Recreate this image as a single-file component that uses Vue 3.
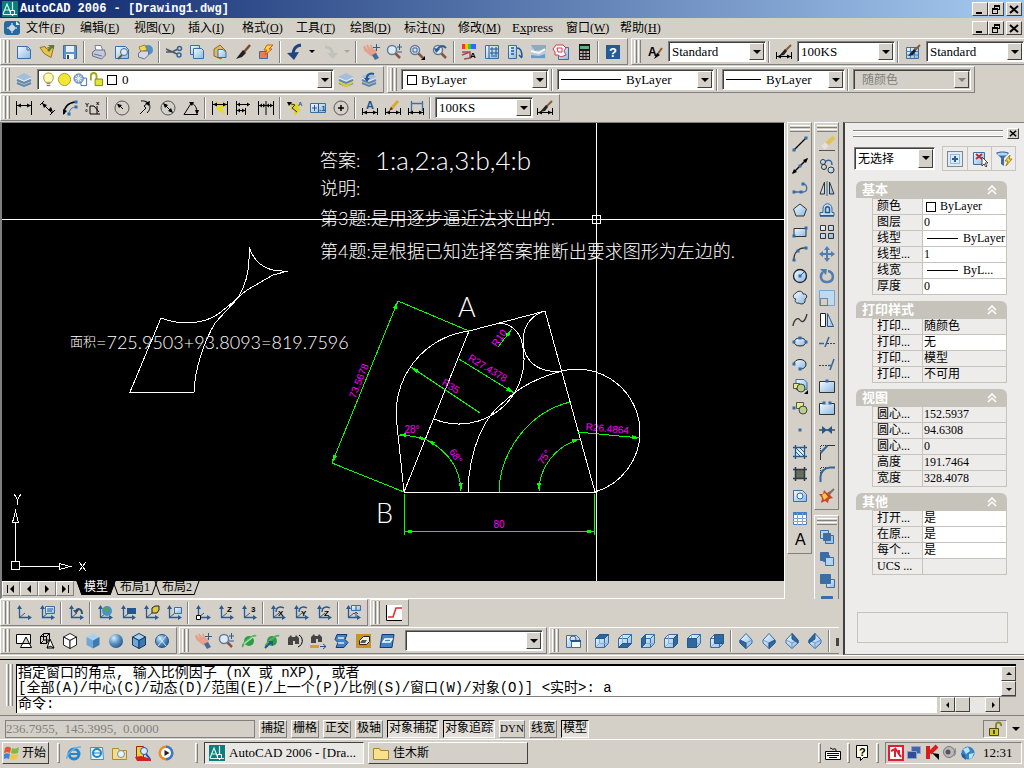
<template>
  <div class="app">
    <svg class="defs" aria-hidden="true">
      <defs>
        <linearGradient id="sky" x1="0" y1="0" x2="1" y2="1">
          <stop offset="0" stop-color="#f4faff" />
          <stop offset="1" stop-color="#8ab8e4" />
        </linearGradient>
        <radialGradient id="ball" cx="0.35" cy="0.3" r="0.8">
          <stop offset="0" stop-color="#d4ecff" />
          <stop offset="0.5" stop-color="#5b92c4" />
          <stop offset="1" stop-color="#1c4c80" />
        </radialGradient>
      </defs>
    </svg>

    <header class="titlebar">
      <svg class="icon" viewBox="0 0 16 16" v-html="icons.acad"></svg>
      <h1>AutoCAD 2006 - [Drawing1.dwg]</h1>
      <div class="window-buttons">
        <button v-for="b in windowButtons" :key="b" :class="b" :aria-label="b">
          <svg viewBox="0 0 10 9" v-html="glyphs[b]"></svg>
        </button>
      </div>
    </header>

    <nav class="menubar">
      <svg class="icon" viewBox="0 0 16 16" v-html="icons.dwg"></svg>
      <button v-for="m in menus" :key="m.name" class="menu" :class="{ latin: m.name === 'Express' }">
        <template v-if="m.key">{{ m.name }}(<u>{{ m.key }}</u>)</template>
        <template v-else>E<u>x</u>press</template>
      </button>
      <div class="window-buttons">
        <button v-for="b in windowButtons" :key="b" :class="b" :aria-label="'document ' + b">
          <svg viewBox="0 0 10 9" v-html="glyphs[b]"></svg>
        </button>
      </div>
    </nav>

    <div v-for="(row, r) in topRows" :key="r" class="toolbar-row">
      <div v-for="(bar, n) in row" :key="n" class="toolbar">
        <span class="grip"></span>
        <template v-for="(item, i) in bar" :key="i">
          <span v-if="item === '|'" class="sep"></span>
          <span v-else-if="item === 'v' || item === 'x'" class="drop" :class="{ off: item === 'x' }"></span>
          <button v-else-if="typeof item === 'string'" class="tool" :aria-label="item">
            <svg class="icon" viewBox="0 0 16 16" v-html="icons[item]"></svg>
          </button>
          <span v-else class="combo" :class="[item.size, { disabled: item.disabled }]">
            <svg v-for="g in item.icons || []" :key="g" class="icon small" viewBox="0 0 16 16" v-html="icons[g]"></svg>
            <i v-if="item.swatch" class="swatch"></i>
            <i v-if="item.line" class="line" :class="item.line"></i>
            <select :aria-label="item.label" :disabled="item.disabled"><option>{{ item.text }}</option></select>
            <i class="arrow"></i>
          </span>
        </template>
      </div>
    </div>

    <div class="workspace">
      <div class="left">
        <div class="drawing-row">
          <section class="drawing">
            <svg class="canvas" role="img" aria-label="Drawing1.dwg">
              <defs>
                <marker id="tip" viewBox="0 0 8 4" refX="8" refY="2" markerWidth="8" markerHeight="4" orient="auto-start-reverse">
                  <path d="M0 0L8 2L0 4Z" fill="#0f0" />
                </marker>
              </defs>
              <g transform="translate(-2 -123)">
                <g class="white">
                  <path d="M404 492H595L545 311L469 331L404 492L397 425" />
                  <path d="M469 331A83 83 0 0 0 397 425" />
                  <path d="M434 419A65 65 0 0 0 522 343A24 24 0 0 0 499 323" />
                  <path d="M545 311C532 315 523 325 523 341C523 360 538 374 562 371" />
                  <path d="M468 492C469 448 485 415 505 401C520 386 540 377 562 371A63 63 0 0 1 640 432A63 63 0 0 1 595 492" />
                  <path d="M161 318C178 325 200 324 213 317C222 313 232 302 247 290L273 275L288 271C270 272 256 267 249 247C250 262 248 282 238 298L215 323C204 342 195 368 194 392H130Z" />
                  <path d="M11.500 561.500h8v8h-8zM15.500 561V522M20 566.500H59M15.500 511L12.500 522.500H18.500ZM70 566.500L59.500 563.500V569.500Z" />
                  <path d="M14 494L17.500 499.500L21 494M17.500 499.500V505M79 562L86 571M86 562L79 571" />
                </g>
                <g class="green">
                  <path d="M404.500 494V535M594.500 494V535M398 301L469 331M332 463L404 492" />
                  <path class="both" d="M404 531.500H595" />
                  <path class="both" d="M398 301L332 463" />
                  <path class="end" d="M498 347L512 329" />
                  <path class="end" d="M459 359L514 393" />
                  <path class="end" d="M480 413L411 367" />
                  <path class="end" d="M578 432L640 438" />
                  <path class="both" d="M398 435Q412 435 427 440" />
                  <path class="both" d="M427 440Q460 458 461 491" />
                  <path d="M570 402C530 412 500 450 499 492" />
                  <path class="both" d="M580 439C555 446 539 468 539 491" />
                </g>
                <g class="dims">
                  <text v-for="d in dims" :key="d.text" :transform="`translate(${d.x} ${d.y}) rotate(${d.angle})`">{{ d.text }}</text>
                </g>
                <g class="notes">
                  <text class="big" x="458" y="317">A</text>
                  <text class="big" x="376" y="523">B</text>
                  <text class="hanzi" x="320" y="167">答案:</text>
                  <text class="answers" x="375" y="170">1:a,2:a,3:b,4:b</text>
                  <text class="hanzi" x="320" y="195">说明:</text>
                  <text class="hanzi" x="320" y="225">第3题:是用逐步逼近法求出的.</text>
                  <text class="hanzi" x="320" y="258">第4题:是根据已知选择答案推断出要求图形为左边的.</text>
                  <text class="area" x="70" y="346">面积</text>
                  <text class="sum" x="96" y="349">=725.9503+93.8093=819.7596</text>
                </g>
                <path class="cross" d="M2 219.500H4000M596.500 123V4000M592.500 215.500h8v8h-8z" />
              </g>
            </svg>
            <div class="tabs">
              <button v-for="b in ['first', 'prev', 'next', 'last']" :key="b" class="nav" :aria-label="b">
                <svg viewBox="0 0 10 10" v-html="glyphs[b]"></svg>
              </button>
              <button v-for="(t, i) in ['模型', '布局1', '布局2']" :key="t" class="tab" :class="{ active: i === 0 }">{{ t }}</button>
            </div>
          </section>
          <aside v-for="(column, c) in sideColumns" :key="c" class="side">
            <div v-for="(bar, n) in column" :key="n" class="toolbar vertical">
              <span class="grip"></span>
              <button v-for="item in bar" :key="item" class="tool" :aria-label="item">
                <svg class="icon" viewBox="0 0 16 16" v-html="icons[item]"></svg>
              </button>
            </div>
          </aside>
        </div>
        <div v-for="(row, r) in bottomRows" :key="r" class="toolbar-row">
          <div v-for="(bar, n) in row" :key="n" class="toolbar">
            <span class="grip"></span>
            <template v-for="(item, i) in bar" :key="i">
              <span v-if="item === '|'" class="sep"></span>
              <button v-else-if="typeof item === 'string'" class="tool" :aria-label="item">
                <svg class="icon" viewBox="0 0 16 16" v-html="icons[item]"></svg>
              </button>
              <span v-else class="combo" :class="item.size">
                <select :aria-label="item.label"><option>{{ item.text }}</option></select>
                <i class="arrow"></i>
              </span>
            </template>
          </div>
        </div>
      </div>

      <aside class="properties">
        <div class="palette-head">
          <span class="palette-grip"></span>
          <button class="palette-close" aria-label="close palette">
            <svg viewBox="0 0 10 9" v-html="glyphs.close"></svg>
          </button>
        </div>
        <div class="palette-pick">
          <span class="combo selection">
            <select aria-label="选择"><option>无选择</option></select>
            <i class="arrow"></i>
          </span>
          <div class="pick-buttons">
            <button v-for="b in ['pickadd', 'pickobj', 'quick']" :key="b" :aria-label="b">
              <svg class="icon" viewBox="0 0 16 16" v-html="icons[b]"></svg>
            </button>
          </div>
        </div>
        <section v-for="s in sections" :key="s.title" class="group">
          <h2>
            {{ s.title }}
            <svg viewBox="0 0 10 10"><path d="M1 5L5 1L9 5M1 9L5 5L9 9" fill="none" stroke="#fff" stroke-width="1.5" /></svg>
          </h2>
          <table>
            <tbody>
              <tr v-for="(p, i) in s.rows" :key="i">
                <th scope="row">{{ p[0] }}</th>
                <td :class="{ locked: p[2] === 'locked' }">
                  <span class="cell">
                    <i v-if="p[2] === 'swatch'" class="swatch"></i>
                    <i v-if="p[2] === 'line'" class="line thin"></i>{{ p[1] }}
                  </span>
                </td>
              </tr>
            </tbody>
          </table>
        </section>
        <div class="hint"></div>
      </aside>
    </div>

    <section class="command">
      <span class="command-grip"></span>
      <div class="console">
        <div class="history">
          <p>指定窗口的角点, 输入比例因子 (nX 或 nXP), 或者<br />[全部(A)/中心(C)/动态(D)/范围(E)/上一个(P)/比例(S)/窗口(W)/对象(O)] &lt;实时&gt;: a</p>
          <div class="vscroll">
            <button aria-label="scroll up"><svg viewBox="0 0 10 10" v-html="glyphs.up"></svg></button>
            <button aria-label="scroll down"><svg viewBox="0 0 10 10" v-html="glyphs.down"></svg></button>
          </div>
        </div>
        <div class="prompt">
          <label for="cmd">命令:</label>
          <input id="cmd" type="text" />
          <div class="hscroll">
            <button aria-label="scroll left"><svg viewBox="0 0 10 10" v-html="glyphs.left"></svg></button>
            <button class="thumb" aria-label="scroll thumb"></button>
            <i></i>
            <button aria-label="scroll right"><svg viewBox="0 0 10 10" v-html="glyphs.right"></svg></button>
          </div>
        </div>
      </div>
    </section>

    <div class="statusbar">
      <output class="coords">236.7955, &nbsp;145.3995, &nbsp;0.0000</output>
      <button v-for="m in modes" :key="m.text" class="mode" :class="{ on: m.on, latin: m.text === 'DYN' }">{{ m.text }}</button>
      <button class="lock" aria-label="lock toolbars">
        <svg class="icon" viewBox="0 0 16 16" v-html="icons.padlock"></svg>
      </button>
      <i class="drop wide"></i>
    </div>

    <footer class="taskbar">
      <button class="start">
        <svg class="icon" viewBox="0 0 16 16" v-html="icons.flag"></svg>开始
      </button>
      <span class="divider"></span>
      <div class="quick">
        <button v-for="q in ['ie', 'outlook', 'explorer', 'viewer', 'player']" :key="q" :aria-label="q">
          <svg class="icon" viewBox="0 0 16 16" v-html="icons[q]"></svg>
        </button>
      </div>
      <span class="divider"></span>
      <button class="task current">
        <svg class="icon" viewBox="0 0 16 16" v-html="icons.acad"></svg>AutoCAD 2006 - [Dra...
      </button>
      <button class="task">
        <svg class="icon" viewBox="0 0 16 16" v-html="icons.folder"></svg>佳木斯
      </button>
      <div class="tray-tools">
        <span class="divider"></span>
        <svg class="icon" viewBox="0 0 16 16" v-html="icons.keyboard"></svg>
        <span class="divider"></span>
        <svg class="icon" viewBox="0 0 16 16" v-html="icons.ask"></svg>
        <span class="divider"></span>
      </div>
      <div class="tray">
        <svg v-for="t in ['redapp', 'network', 'kav', 'volume', 'globe']" :key="t" class="icon" viewBox="0 0 16 16" v-html="icons[t]"></svg>
        <time>12:31</time>
      </div>
    </footer>
  </div>
</template>

<script setup>
const windowButtons = ['minimize', 'restore', 'close']

const glyphs = {
  minimize: '<path d="M1 7h6v2H1z"/>',
  restore: '<path d="M3 0h6v5H7v4H1V3h2zM4 2v1h3v1h1V2zM2 5v3h4V5z" fill-rule="evenodd"/>',
  close: '<path d="M1 1L9 8M9 1L1 8" stroke="#000" stroke-width="2"/>',
  first: '<path d="M1 1h1v8H1zM8 1v8L4 5z"/>',
  prev: '<path d="M7 1v8L3 5z"/>',
  next: '<path d="M3 1v8l4-4z"/>',
  last: '<path d="M8 1h1v8H8zM2 1v8l4-4z"/>',
  up: '<path d="M2 6h6L5 3z"/>',
  down: '<path d="M2 4h6L5 7z"/>',
  left: '<path d="M6 2v6L3 5z"/>',
  right: '<path d="M4 2v6l3-3z"/>',
}

const menus = [
  { name: '文件', key: 'F' },
  { name: '编辑', key: 'E' },
  { name: '视图', key: 'V' },
  { name: '插入', key: 'I' },
  { name: '格式', key: 'O' },
  { name: '工具', key: 'T' },
  { name: '绘图', key: 'D' },
  { name: '标注', key: 'N' },
  { name: '修改', key: 'M' },
  { name: 'Express' },
  { name: '窗口', key: 'W' },
  { name: '帮助', key: 'H' },
]

const topRows = [
  [
    ['new', 'open', 'save', '|', 'print', 'preview', 'publish', '|', 'cut', 'copy', 'paste', 'match', 'block', '|', 'undo', 'v', 'redo', 'x', '|', 'pan', 'zoom', 'zoomwin', 'zoomprev', '|', 'props', 'center', 'palettes', 'sheets', 'markup', 'calc', '|', 'help'],
    ['textstyle', { text: 'Standard', label: '文字样式', size: 'w98' }, '|', 'dimstyle', { text: '100KS', label: '标注样式', size: 'w98' }, '|', 'tablestyle', { text: 'Standard', label: '表格样式', size: 'w98' }],
  ],
  [
    ['layers', { text: '0', label: '图层', size: 'w298', icons: ['bulb', 'sun', 'freeze', 'unlock'], swatch: true }, 'layermake', 'layerprev'],
    [
      { text: 'ByLayer', label: '颜色', size: 'w148', swatch: true }, '|',
      { text: 'ByLayer', label: '线型', size: 'w158', line: 'long' }, '|',
      { text: 'ByLayer', label: '线宽', size: 'w123', line: 'mid' }, '|',
      { text: '随颜色', label: '打印样式', size: 'w120', disabled: true },
    ],
  ],
  [
    ['dlinear', 'daligned', 'darc', 'dordinate', '|', 'dradius', 'djogged', 'ddiameter', 'dangular', '|', 'dquick', 'dbaseline', 'dcontinue', '|', 'dleader', 'dtolerance', 'dcenter', '|', 'dedit', 'dtedit', 'dupdate', '|', { text: '100KS', label: '标注样式', size: 'w98' }, 'dimstyle'],
  ],
]

const sideColumns = [
  [['line', 'xline', 'pline', 'polygon', 'rect', 'arc', 'circle', 'cloud', 'spline', 'ellipse', 'ellarc', 'insert', 'mkblock', 'point', 'hatch', 'gradient', 'region', 'table', 'mtext']],
  [
    ['erase', 'copyobj', 'mirror', 'offset', 'array', 'move', 'rotate', 'scale', 'stretch', 'trim', 'extend', 'breakpt', 'break', 'join', 'chamfer', 'fillet', 'explode'],
    ['front', 'back', 'above', 'under'],
  ],
]

const bottomRows = [
  [
    ['ucs', 'ucsnamed', '|', 'ucsprev', '|', 'ucsworld', 'ucsobj', 'ucsface', 'ucsview', '|', 'ucsorigin', 'ucsz', 'ucs3', '|', 'rotx', 'roty', 'rotz', '|', 'ucsapply'],
    ['graph'],
  ],
  [
    ['wire2d', 'wire3d', 'hidden', 'flat', 'gouraud', 'flatedge', 'gouraudedge'],
    ['pan', 'zoom', 'orbit', 'corbit', 'swivel', 'distance', 'clip', 'clipfront', 'clipback', { text: '', label: '视图', size: 'w138' }],
    ['views', '|', 'vtop', 'vbottom', 'vleft', 'vright', 'vfront', 'vback', '|', 'sw', 'se', 'ne', 'nw', '|', 'camera'],
  ],
]

const sections = [
  {
    title: '基本',
    rows: [
      ['颜色', 'ByLayer', 'swatch'],
      ['图层', '0'],
      ['线型', 'ByLayer', 'line'],
      ['线型...', '1'],
      ['线宽', 'ByL...', 'line'],
      ['厚度', '0'],
    ],
  },
  {
    title: '打印样式',
    rows: [
      ['打印...', '随颜色', 'locked'],
      ['打印...', '无'],
      ['打印...', '模型', 'locked'],
      ['打印...', '不可用', 'locked'],
    ],
  },
  {
    title: '视图',
    rows: [
      ['圆心...', '152.5937', 'locked'],
      ['圆心...', '94.6308', 'locked'],
      ['圆心...', '0', 'locked'],
      ['高度', '191.7464', 'locked'],
      ['宽度', '328.4078', 'locked'],
    ],
  },
  {
    title: '其他',
    rows: [
      ['打开...', '是'],
      ['在原...', '是'],
      ['每个...', '是'],
      ['UCS ...', '', 'locked'],
    ],
  },
]

const modes = [
  { text: '捕捉' },
  { text: '栅格' },
  { text: '正交' },
  { text: '极轴' },
  { text: '对象捕捉', on: true },
  { text: '对象追踪', on: true },
  { text: 'DYN' },
  { text: '线宽' },
  { text: '模型', on: true },
]

const dims = [
  { text: '73.5678', x: 362, y: 382, angle: -68 },
  { text: 'R10', x: 502, y: 340, angle: -54 },
  { text: 'R27.4378', x: 486, y: 371, angle: 31 },
  { text: 'R35', x: 449, y: 389, angle: 33 },
  { text: '28°', x: 412, y: 433, angle: 0 },
  { text: '68°', x: 453, y: 458, angle: 55 },
  { text: '75°', x: 547, y: 459, angle: -55 },
  { text: 'R26.4864', x: 607, y: 432, angle: 5 },
  { text: '80', x: 499, y: 528, angle: 0 },
]

// small builders shared by the icon set
const stroke = (d, color = '#000', width = 1) => `<path d="${d}" fill="none" stroke="${color}" stroke-width="${width}"/>`
const fill = (d, color = '#000') => `<path d="${d}" fill="${color}"/>`
const shape = (d, color = 'url(#sky)', edge = '#3a6ea5') => `<path d="${d}" fill="${color}" stroke="${edge}"/>`
const dots = (...pts) => pts.map(([x, y]) => `<rect x="${x - 1.5}" y="${y - 1.5}" width="3" height="3" fill="#2f6dad"/>`).join('')
const letter = (t, x, y, size = 9, color = '#000') => `<text x="${x}" y="${y}" font-size="${size}" font-weight="700" font-family="Liberation Sans, sans-serif" fill="${color}">${t}</text>`

const page = shape('M1.500 2.500h10l3 3v9h-13z')
const span = stroke('M.5 8v7M15.500 8v7M1 12.500h14') + fill('M1 12.500l4-2v4zM15 12.500l-4-2v4z')
const brush = stroke('M15 1L9 7', '#8a5a34', 2) + fill('M9 5l2 2-3 4-5 1z', '#222')
const axes = stroke('M3.500 3v9.500H14', '#2c5a92', 1.3) + stroke('M3.500 12.500L9 8', '#2c5a92') + fill('M3.500 0L1 4h5zM16 12.500l-4-2.500v5z', '#2c5a92')
const lens = '<circle cx="6" cy="6" r="4.500" fill="#dcebf8" stroke="#667b92" stroke-width="1.500"/>' + stroke('M9.500 9.500L14 14', '#8a5540', 2.5)
const hand = fill('M0 3l1.500-1.500L5 6 3 1l1.500-.5L8 5 7 1l1.500-.5L11 6l1-1 1.500 1v5l-1 2-5-1-6-5z', '#e5a08e') + fill('M9 11l4-2 3 5-4 2z', '#446b9c')
const cubeEdges = 'M1.500 5.500h9v9h-9zM1.500 5.500l4-4h9v9l-4 4M10.500 5.500l4-4'
const cube = (face) => shape(cubeEdges) + stroke('M5.500 1.500v9h9M1.500 14.500l4-4', '#8aaed2') + shape(face, '#2f689e', '#24578c')
const box = (top, left, right, edge) =>
  shape('M8 .5L14.500 4 8 7.500 1.500 4z', top, edge) + shape('M1.500 4L8 7.500v8L1.500 12z', left, edge) + shape('M14.500 4L8 7.500v8l6.500-3.500z', right, edge)
const diamond = (face) => shape('M8 .5L14 7v3l-6 5.500L2 10V7z') + stroke('M2 7l6 3 6-3M8 10v5', '#6d9acb') + shape(face, '#2f689e', '#24578c')
const stack = fill('M8 1l8 4-8 4-8-4z', '#a5bfda') + stroke('M1 8l7 3 7-3M1 11l7 3 7-3', '#6186ae', 2) + stroke('M1 6l7 3 7-3', '#dcebf8')
const order = (a, b) => shape('M1.500 1.500h8v8h-8z', a) + shape('M6.500 6.500h8v8h-8z', b)
const saturn = '<circle cx="8" cy="8" r="5" fill="#2d9b48"/>' + stroke('M2 14C0 11 13 1 15 3', '#50b060', 2)

const icons = {
  acad: fill('M0 0h16v16H0z', '#0b7f7a') + stroke('M1 13L5 3l4 10M3 9h5M10.500 1v14M1 13.500h14', '#d8f2ef', 1.2) + shape('M8.500 9.500h4v4h-4z', '#0b7f7a', '#fff'),
  dwg: '<rect y="1" width="16" height="14" rx="3" fill="#27699d"/>' + fill('M12 1l4 4h-4z', '#d8ecfa') + stroke('M8 3v10M3 8h10M6 6h4v4H6z', '#fff'),
  new: page + stroke('M11 3v3h3', '#3a6ea5'),
  open: shape('M1 3.500l5-1 1 2 8-3-3 12-7-4z', '#e8c34d', '#9a7424') + fill('M9 1h6v4l-2-1-3 4-2-2 3-3z', '#5b7a3c'),
  save: shape('M1.500 1.500h13v13h-13z', '#5c93ca') + fill('M4 2h8v6H4z', '#e4f1fc') + fill('M4 10h8v5H4z', '#f5f5f5') + fill('M5 11h2v4H5z', '#345'),
  print: shape('M4 1.500h6l2 6H5z', '#fff', '#77809a') + shape('M1.500 8l3-2h9l1 5-4 4-9-3z', '#c5c9dc', '#666e8c') + stroke('M3 10l8 2', '#69718e'),
  preview: page + '<circle cx="10" cy="8" r="3.500" fill="#d8ecfb" stroke="#4b6a8a"/>' + stroke('M8 11l-4 4', '#7a5230', 2),
  publish: '<circle cx="11" cy="6" r="5" fill="#4d92cb"/>' + shape('M2 3l6-2 2 5-6 2z', '#f5d94b', '#a5841e') + shape('M1.500 9l3-2h7v4l-4 4-6-2z', '#d7d9e4', '#6d7392'),
  cut: stroke('M0 5l11 5M0 8h6l6-3', '#4a5666', 1.5) + '<circle cx="13.500" cy="4.500" r="2" fill="none" stroke="#35659b" stroke-width="1.500"/><circle cx="13" cy="11" r="2" fill="none" stroke="#35659b" stroke-width="1.500"/>',
  copy: shape('M1.500 1.500h9v9h-9z') + shape('M4.500 4.500h8l2 2v8h-10z'),
  paste: shape('M2 5l6-4 6 6-5 8-7-3z', '#d9b96a', '#8d6b2a') + shape('M6 5.500h5l3 3v5H6z'),
  match: stroke('M15 1L9 8', '#7a4a2a', 2.5) + fill('M8 6l3 3-4 4-6 2 3-4z', '#222'),
  block: shape('M1.500 7.500h8v7h-8z', '#f07a50', '#3a6ea5') + shape('M9 1h6l-4 4h3l-7 6 2-5H6z', '#ffd84a', '#d05a1c'),
  undo: stroke('M14 1C8 2 5 6 7 13', '#1f4480', 3) + fill('M0 9l12-1-5 8z', '#1f4480'),
  redo: stroke('M3 3c6 0 8 4 7 8', '#c2c2bc', 3) + fill('M16 9H5l6 6z', '#c2c2bc'),
  pan: hand + stroke('M13.500 0v7M10 3.500h7', '#2f5c90'),
  zoom: lens + stroke('M13.500 0v6M11 3h5M11 8h5', '#2f5c90'),
  zoomwin: lens + stroke('M4 4h4v4H4z', '#2f5c90') + fill('M12 16h4v-4z'),
  zoomprev: lens + stroke('M14 4C10 0 6 3 5 7', '#2f5c90', 2) + fill('M2 4l6 1-4 4z', '#2f5c90'),
  props: '<path d="M1 0h4v5H1z" fill="#f33"/><path d="M4 0h3v5H4z" fill="#fc0"/><path d="M7 0h3v5H7z" fill="#3c3"/><path d="M10 0h5v5h-5z" fill="#36f"/>' + stroke('M1 8h8M1 11l8-3v6l-6 1', '#a34e5c', 1.5) + letter('A', 9, 14, 8),
  center: shape('M1.500 1.500h13v13h-13z') + stroke('M5 2v12M7 4h2v2H7zM11 4h2v2h-2zM7 8h2v2H7zM11 8h2v2h-2zM7 12h6', '#24578c'),
  palettes: shape('M1.500 1.500h8v13h-8z') + stroke('M4 4h3M4 7h3M4 10h3M10 4c4 0 5 3 5 9M12 11l3 3', '#24578c', 1.5),
  sheets: fill('M1 1h15v14H1z', '#b9cbd8') + fill('M1 1h15v4L5 7z', '#8fa9bd') + stroke('M1 7l8 2 6-4', '#f4f8fa', 2) + fill('M1 11l8 1 6-2v4H1z', '#6c9bc4'),
  markup: shape('M5.500 3.500h10v12h-10z') + shape('M3 1h7l3 3-2 3 2 4-5 2-3-2-3 0V8L0 5z', '#fff', '#dc3549') + stroke('M4 4h5v4H5z', '#dc3549'),
  calc: fill('M3 0h11v16H3z', '#201818') + fill('M4 2h9v3H4z', '#58b084') + stroke('M4 8h9M4 11h9M4 14h9', '#e9dede', 1.5) + stroke('M7 6v9M10 6v9', '#201818'),
  help: fill('M1 1h14v14H1z', '#235b96') + letter('?', 4, 13, 13, '#fff'),
  textstyle: letter('A', 1, 12, 12) + stroke('M15 4l-5 7', '#8a5a34', 2) + fill('M10 9l3 2-6 4z'),
  dimstyle: span + brush,
  tablestyle: shape('M1.500 3.500h12v11h-12z') + stroke('M1 7.500h12M1 11h12M5.500 4v10M9.500 4v10', '#4383c5') + brush,
  layers: stack,
  layermake: stack + stroke('M1 10l7 4 7-4', '#e4cf20', 2),
  layerprev: stack + stroke('M13 2C8 0 5 4 6 8', '#28568c', 2) + fill('M3 6l6 0-3 4z', '#28568c'),
  bulb: '<path d="M5 11C1 6 3 1 8 1s7 5 3 10z" fill="#fffab4" stroke="#a99232"/>' + stroke('M6 12.500h4M6 14.500h4', '#667'),
  sun: '<circle cx="8" cy="8" r="6.500" fill="#f3e632" stroke="#9aa123"/>',
  freeze: shape('M8.500 6.500h6v8h-6z', '#fff') + '<circle cx="6" cy="7" r="5" fill="#91afcd" stroke="#567ba3"/>' + stroke('M2 7h8M6 3v8M3 4l6 6M9 4l-6 6', '#e4eff8'),
  unlock: stroke('M2 9V4c0-4 6-4 6 0v4', '#a4a51b', 2) + shape('M6.500 7.500h8v7h-8z', '#dfe53b', '#7e831c'),
  dlinear: stroke('M.5 1v14M15.500 1v14M1 5.500h14') + fill('M1 5.500l4-2v4zM15 5.500l-4-2v4z'),
  daligned: stroke('M1 5l4-4M11 15l5-5M3 3l10 10') + fill('M3 3l5 2-3 3zM14 12l-5-2 3-3z'),
  darc: stroke('M2 14C2 7 6 3 13 2', '#000', 1.3) + stroke('M7 14c0-4 3-7 7-7', '#4378b4') + dots([14, 2], [14, 7], [7, 14]) + fill('M1 15V9l4 2z'),
  dordinate: stroke('M5 6v8h10M5 6h4l5 6M12 6v8') + letter('x', 11, 5, 6) + letter('Y', 0, 7, 6) + letter('°', 0, 15, 7),
  dradius: '<circle cx="8" cy="8" r="7" fill="none" stroke="#555"/>' + stroke('M9 9L4 4') + fill('M3 4l5 1-3 3z'),
  djogged: stroke('M4 1c8-1 12 6 6 12M3 14l6-6-2-2 5-4') + fill('M13 1l-1 5-4-3z'),
  ddiameter: '<circle cx="8" cy="8" r="7" fill="none" stroke="#555"/>' + stroke('M4 4l8 8') + fill('M3 3l5 2-3 3zM13 13l-5-2 3-3z'),
  dangular: stroke('M15 14.500H1L9 2M8 3c4 1 6 5 6 10') + fill('M6 2l5 0-2 4zM12 10h4l-2 5z'),
  dquick: fill('M3 1l12 5-5 2 4 7L3 8l4-1z', '#e7dc20') + stroke('M.5 1v14M15.500 1v14M1 4.500h14') + fill('M1 4.500l4-2v4zM15 4.500l-4-2v4z'),
  dbaseline: stroke('M1.500 1v14M10.500 8v7M2 4.500h13M2 10.500h8') + fill('M2 4.500l3-2v4zM2 10.500l3-2v4zM15 4.500l-3-2v4zM10 10.500l-3-2v4z'),
  dcontinue: stroke('M.5 1v14M8 1v14M15.500 1v14M1 5.500h14') + fill('M1 5.500l3-2v4zM8 5.500l-3-2v4zM8 5.500l3-2v4zM15 5.500l-3-2v4z'),
  dleader: fill('M4 3l9 2-2 3 3 1-6 7-1-6H4z', '#ded422') + stroke('M1 3l7 2-3 3 5 4', '#333') + fill('M0 2l5 0-3 4z') + letter('A', 11, 6, 6, '#28568c'),
  dtolerance: shape('M.5 3.500h15v9H.5z') + stroke('M8.500 4v8M4.500 5v6M2 8h5', '#24578c') + letter('.1', 9, 11, 8, '#24578c'),
  dcenter: '<circle cx="8" cy="8" r="7" fill="none" stroke="#555"/>' + stroke('M5 8h6M8 5v6', '#000', 1.5),
  dedit: span + letter('A', 4, 9, 11, '#28568c'),
  dtedit: span + stroke('M13 1L6 9', '#dca931', 3) + fill('M6 7l2 2-4 2z', '#5b2d18'),
  dupdate: span + stroke('M3.500 1v10M14.500 1v10M4 3.500h10', '#416f9f', 1.3),
  line: stroke('M2 14L14 2', '#000', 1.3) + dots([2, 14], [14, 2]),
  xline: stroke('M1 15L15 1', '#000', 1.5) + fill('M0 16l2-5 3 3zM16 0l-2 5-3-3z') + dots([8, 8]),
  pline: stroke('M2 12h9c5 0 5-8 0-8', '#416f9f', 1.3) + dots([2, 12], [9, 12], [11, 4]),
  polygon: shape('M8 2l6.500 5-2.500 7H4L1.500 7z', 'url(#sky)', '#333'),
  rect: shape('M2 4.500h12v8H2z', 'url(#sky)', '#333') + dots([2, 12], [14, 4]),
  arc: stroke('M2 15C1 7 7 1 14 2', '#333', 1.3) + dots([2, 14], [6, 5], [14, 2]),
  circle: '<circle cx="8" cy="8" r="6.500" fill="url(#sky)" stroke="#222" stroke-width="1.300"/>' + stroke('M8 8l4-4', '#35659b') + dots([8, 8]),
  cloud: shape('M4 3c2-3 7-2 7 1 4-1 5 4 2 5 1 5-4 6-6 4-3 1-5-2-3-4-3 0-4-4 0-6z', 'url(#sky)', '#333'),
  spline: stroke('M1 14c1-7 5-9 7-6s5 2 7-6', '#333', 1.3),
  ellipse: '<ellipse cx="8" cy="8" rx="6" ry="4" fill="url(#sky)" stroke="#222"/>' + dots([2, 8], [14, 8], [8, 4]),
  ellarc: shape('M2 8c0-6 12-6 12 0 0 3-2 5-6 5', 'url(#sky)', '#222') + dots([2, 8], [8, 13]),
  insert: shape('M4 1.500h8l3 3v7H4z') + shape('M1.500 5.500h6v5h-6z', '#e8ec79', '#555') + '<circle cx="9" cy="10" r="4" fill="#b8cf8b" stroke="#444"/>' + fill('M12 16h4v-4z'),
  mkblock: shape('M4.500 2.500h7v6h-7z', '#e8ec79', '#555') + '<circle cx="11" cy="10" r="4" fill="#b8cf8b" stroke="#444"/>' + dots([2, 8]),
  point: dots([8, 8]),
  hatch: shape('M3.500 3.500h9v9h-9z', '#dcebf8', '#24578c') + stroke('M1 3.500h14M1 12.500h14M3.500 1v14M12.500 1v14', '#24578c', 1.3) + stroke('M4 4l8 8M4 8l4 4M8 4l4 4', '#24578c'),
  gradient: shape('M3.500 3.500h9v9h-9z', '#646e59', '#222') + stroke('M1 3.500h14M1 12.500h14M3.500 1v14M12.500 1v14', '#29384a', 1.5),
  region: shape('M1.500 2.500h9l4 4v7h-13z') + '<circle cx="8" cy="8" r="3" fill="#eef6ff" stroke="#35659b"/>',
  table: shape('M1.500 2.500h13v12h-13z', '#fff', '#4383c5') + fill('M1 2h14v3H1z', '#4383c5') + stroke('M1 8.500h14M1 11.500h14M5.500 3v12M10.500 3v12', '#79a7dc'),
  mtext: '<text x="3" y="13" font-size="16" font-family="Liberation Sans, sans-serif">A</text>',
  erase: stroke('M15 1L8 8', '#e3c350', 4) + stroke('M8 8l-4 4', '#e8dede', 5) + stroke('M0 14.500h16', '#555'),
  copyobj: '<circle cx="4" cy="4" r="2.500" fill="url(#sky)" stroke="#333"/><circle cx="5" cy="9" r="2.500" fill="url(#sky)" stroke="#333"/><circle cx="12" cy="12" r="3" fill="url(#sky)" stroke="#333"/>' + stroke('M7 3c4-2 6 0 6 4', '#35659b', 1.5),
  mirror: shape('M5.500 2v12H1zM10.500 2v12H15z', 'url(#sky)', '#333') + stroke('M8 1v15', '#35659b'),
  offset: shape('M1 10.500h3V7c0-7 9-7 9 0v3.500h2v3H1z', '#c8e0f6', '#35659b') + stroke('M1 14h14M6.500 10.500V7c0-3 4-3 4 0v3.500z', '#24578c', 1.5),
  array: shape('M1.500 1.500h5v5h-5zM9.500 1.500h5v5h-5zM1.500 9.500h5v5h-5zM9.500 9.500h5v5h-5z', 'url(#sky)', '#333'),
  move: fill('M8 0l3 4H9v3h3V5l4 3-4 3V9H9v3h2l-3 4-3-4h2V9H4v2L0 8l4-3v2h3V4H5z', '#4e7eb2'),
  rotate: stroke('M9 3c6 1 7 10 0 11C2 15 0 8 4 4', '#4e7eb2', 2.5) + fill('M1 1h7L7 7z', '#4e7eb2'),
  scale: shape('M.5.5h15v15H.5z', '#bddaf2', '#7aa6d4') + '<path d="M1.500 8.500h7v7h-7z" fill="#d4d0c8" stroke="#333" stroke-dasharray="1 1"/>',
  stretch: '<path d="M1.500 1.500h5v13h-5z" fill="#fff" stroke="#222"/>' + shape('M8.500 1.500v13h6z', 'url(#sky)', '#24578c'),
  trim: stroke('M0 9.500h5M6 13l4-10', '#35659b', 1.5) + stroke('M8 9.500h2M11 9.500h2M14 9.500h2', '#444'),
  extend: stroke('M0 9.500h2M3 9.500h2M6 9.500h2', '#444') + stroke('M9 9.500h3M11 14l4-11', '#35659b', 1.5),
  breakpt: shape('M.5 3.500h15v11H.5z', 'url(#sky)', '#333') + dots([8, 3]),
  break: shape('M.5 3.500h15v11H.5z', 'url(#sky)', '#333') + fill('M6 2h4v3H6z', '#d4d0c8') + dots([5, 3], [11, 3]),
  join: stroke('M0 8h16', '#333', 1.3) + fill('M3 4l5 4-5 4zM13 4L8 8l5 4z', '#24578c'),
  chamfer: '<path d="M1.500 9V1.500H9" fill="none" stroke="#333" stroke-dasharray="1 1"/>' + stroke('M1.500 16V9l7-7.500H16', '#333') + stroke('M1.500 9l7-7.500', '#35659b', 2),
  fillet: '<path d="M1.500 9V1.500H9" fill="none" stroke="#333" stroke-dasharray="1 1"/>' + stroke('M1.500 16V11C2 5 6 2 11 1.500h5', '#35659b', 2),
  explode: fill('M0 6l4 0 1-4 3 3 5-3-2 5 3 3-4 1-1 4-3-2-4 2 1-5z', '#c9472c') + fill('M3 7l3-2 3 4-4 3z', '#f7c940') + stroke('M10 6l5-5', '#777', 2),
  front: order('#b6d4f0', '#9dc3e8') + shape('M4.500 4.500h7v7h-7z', '#3a6ea5'),
  back: shape('M4.500 4.500h6v6h-6z', '#b6d4f0') + order('#3a6ea5', '#b6d4f0'),
  above: shape('M7.500 6.500h8v8h-8z') + shape('M1.500 1.500h10v9h-10z', '#3a6ea5'),
  under: shape('M2.500 1.500h11v9h-11z', '#3a6ea5'),
  ucs: axes,
  ucsnamed: axes + shape('M6.500 1.500h9v7h-9z') + stroke('M8 4h6M8 6h5', '#24578c'),
  ucsprev: axes + stroke('M14 9c0-6-5-6-6-3', '#35506f', 2) + fill('M5 5h6l-3 4z', '#35506f'),
  ucsworld: axes + '<circle cx="10" cy="6" r="5" fill="#4a91cc"/>' + fill('M7 3l4-1 1 4-3 2z', '#54a844'),
  ucsobj: axes + fill('M7 3h9v6H7z', '#24578c'),
  ucsface: axes + shape('M9 3l3-2h4v4l-2 3H9z', '#d8ca3f', '#222'),
  ucsview: axes + shape('M8.500 2.500h7v6h-7z'),
  ucsorigin: axes + shape('M1.500 10.500h4v4h-4z', '#fff', '#000'),
  ucsz: axes + letter('Z', 9, 7, 8),
  ucs3: axes + letter('3', 10, 7, 8),
  rotx: axes + stroke('M6 7c0-5 4-6 8-4', '#24578c', 1.3) + letter('X', 8, 11, 8),
  roty: axes + stroke('M6 7c0-5 4-6 8-4', '#24578c', 1.3) + letter('Y', 8, 11, 8),
  rotz: axes + stroke('M6 7c0-5 4-6 8-4', '#24578c', 1.3) + letter('Z', 8, 11, 8),
  ucsapply: axes + shape('M6.500.5h9v5h-9z') + stroke('M11 1v4M11 12V7M9 9l2-2 2 2', '#24578c'),
  graph: fill('M0 0h16v16H0z', '#fff') + stroke('M.5 0v15.500H16') + stroke('M2 12h5l3-9h6', '#e02a2a', 1.5),
  wire2d: '<path d="M.5 1.500h14v9H.5zM4.500 14.500h11L10 4z" fill="#fff" stroke="#000"/>',
  wire3d: stroke('M1.500 3.500h6v7h-6zM1.500 3.500l3-3h6v6l-3 4M7.500 3.500l3-3M4.500 1v6M4.500 7h6M1.500 10.500l3-3') + '<path d="M8 15l3-9 4 9zM8 15l3-2 4 2" fill="#fff" stroke="#000"/>',
  hidden: box('#fff', '#fff', '#fff', '#222'),
  flat: box('#a7d0f2', '#6ea7d8', '#3d79b2', 'none'),
  gouraud: '<circle cx="8" cy="8" r="7" fill="url(#ball)"/>',
  flatedge: box('#a7d0f2', '#6ea7d8', '#3d79b2', '#123a66'),
  gouraudedge: '<circle cx="8" cy="8" r="6.500" fill="url(#ball)" stroke="#24578c"/>' + stroke('M4 3l8 10M12 3L4 13', '#d4e8f8'),
  orbit: saturn + stroke('M3 11l9-7', '#a5e4a5', 1.5),
  corbit: saturn + stroke('M1 15l6-6', '#24578c', 2) + fill('M4 8h5v5z', '#24578c'),
  swivel: fill('M1 5l3-3 1 2h3l1-2 3 3v6H8V8H6v4H1z', '#444') + stroke('M12 2c5 3 4 10-1 12'),
  distance: fill('M1 4l3-3 1 2h3l1-2 3 3v5H8V6H6v4H1z', '#444') + fill('M0 12h9v3H0z', '#d2a32a') + stroke('M10 13.500h6M13 11l3 2.500-3 2.500', '#24578c'),
  clip: shape('M4 1.500h10l-2 5 3 3-4 5H3l2-5-3-3z', '#4382c4', '#143b78') + stroke('M5 5h6M5 10h6', '#d8ecff', 1.5),
  clipfront: fill('M0 1h15v14H0z', '#c9941e') + shape('M3.500 7.500l4-4h6v5l-3 3h-7z', '#eee', '#222') + fill('M6 7h5l-2 3H4z', '#555'),
  clipback: shape('M3 1.500h12l-2 13H1z', '#4382c4', '#143b78') + stroke('M4 9h7l2-3H6z', '#fff', 1.5),
  views: page + '<circle cx="8" cy="6" r="3" fill="none" stroke="#35659b"/>' + shape('M6.500 7.500h9v7h-9z', '#fff') + fill('M6 7h10v2H6z', '#24578c'),
  vtop: cube('M1.500 5.500l4-4h9l-4 4z'),
  vbottom: cube('M1.500 14.500l4-4h9l-4 4z'),
  vleft: cube('M1.500 5.500l4-4v9l-4 4z'),
  vright: cube('M10.500 5.500l4-4v9l-4 4z'),
  vfront: cube('M1.500 5.500h9v9h-9z'),
  vback: cube('M5.500 1.500h9v9h-9z'),
  sw: diamond('M2 7l6 3v5.500L2 10z'),
  se: diamond('M14 7l-6 3v5.500l6-5.500z'),
  ne: diamond('M8 .5L14 7v3L8 6z'),
  nw: diamond('M8 .5L2 7v3l6-4z'),
  camera: fill('M0 5h10v8H0z', '#444'),
  pickadd: '<rect x=".5" y=".5" width="15" height="15" fill="#dcebf8" stroke="#222" stroke-dasharray="1 1"/><rect x="3.500" y="3.500" width="9" height="9" fill="none" stroke="#5687bd" stroke-dasharray="1 1"/>' + stroke('M8 5v6M5 8h6', '#2a5b98', 2),
  pickobj: shape('M1.500 1.500h11v12h-11z') + stroke('M4 3l6 5M10 3L4 8', '#b12d3d', 2) + shape('M10 6v9l2-2 2 3 1-1-2-3h3z', '#fff', '#444'),
  quick: fill('M0 2c2-2 11-2 13 0L8 7v8l-3-2V7z', '#3c6da3') + '<ellipse cx="6.500" cy="3" rx="5" ry="1.500" fill="#b8d4ed"/>' + shape('M14 4l-5 6h3l-2 5 6-7h-3z', '#f4d94a', '#a28316'),
  padlock: stroke('M9 8V4c0-4 6-3 5 1', '#8a861e', 2) + shape('M2.500 7.500h9v7h-9z', '#d0c92f', '#4f4a10') + fill('M6 9h2v4H6z', '#4f4a10'),
  flag: fill('M1 3c3-2 4-1 6 0L6 8C4 7 3 7 0 8z', '#e4572e') + fill('M8 3c2 1 4 1 7-1l-1 6c-3 1-5 1-7 0z', '#7dba45') + fill('M0 9c2-1 4-1 6 0l-1 5c-2-1-3-1-5 0z', '#4083d8') + fill('M7 9c2 1 4 1 7 0l-1 5c-3 1-5 1-7 0z', '#f4c63b'),
  ie: '<circle cx="8" cy="9" r="5" fill="none" stroke="#2586cc" stroke-width="3"/>' + stroke('M4 9h8', '#2586cc', 2) + stroke('M1 14C0 9 9 1 15 2', '#66b2e6', 1.5),
  outlook: shape('M1.500 2.500h12l1 12H2z', '#e8f5ff', '#3594cb') + '<circle cx="8" cy="8" r="4" fill="none" stroke="#1f86c3" stroke-width="2"/>' + stroke('M5 8h7', '#1f86c3'),
  explorer: shape('M.5 3.500h6l1 2h7v9H.5z', '#f5dc85', '#b8872b') + '<circle cx="9" cy="9" r="3.500" fill="#e7f4ff" stroke="#6d91b6"/>',
  viewer: shape('M1.500 1.500h7v12h-7z', '#f2d32f', '#a02020') + fill('M0 12l6-1 10 3v2H2z', '#c22') + '<circle cx="9" cy="6" r="3.500" fill="#d2ecff" stroke="#2757a4"/>' + stroke('M11 9l4 5', '#2757a4', 2),
  player: '<circle cx="8" cy="8" r="7.500" fill="#f08a1e"/><path d="M8 .5a7.500 7.500 0 0 1 0 15z" fill="#3a78c9"/><circle cx="8" cy="8" r="5" fill="#fff"/>' + fill('M6.500 5l5 3-5 3z', '#222'),
  folder: shape('M.5 3.500h6l1 2h8v9H.5z', '#f9e08a', '#a8842a'),
  keyboard: shape('M.5 6.500h15v8H.5z', '#fff', '#000') + stroke('M2 8.500h12M2 10.500h12M4 12.500h8', '#000') + stroke('M5 3c2 0 2 2 4 1s2 1 2 2', '#000'),
  ask: shape('M2.500.5h11v12h-4l-3 3v-3h-4z', '#ffffe4', '#000') + letter('?', 5, 11, 11),
  redapp: fill('M0 0h16v16H0z', '#e02030') + fill('M2 2h12v12H2z', '#fff') + stroke('M3 6l4-2v8M7 3l6 9M11 5v5', '#e02030', 2),
  network: shape('M5.500 1.500h9v7h-9z', '#4565a8', '#8fa2cc') + shape('M1.500 6.500h9v7h-9z', '#304d96', '#8fa2cc'),
  kav: stroke('M4 1v13M13 1L6 8', '#dd1a1a', 4) + fill('M8 8l7 7V9z'),
  volume: '<circle cx="7" cy="7" r="5.500" fill="#b9b9bd" stroke="#777"/><circle cx="6" cy="7" r="2.500" fill="#555"/>' + stroke('M12 11c2-2 2-5 1-8', '#888'),
  globe: '<circle cx="8" cy="8" r="6.500" fill="#3583c8"/>' + fill('M3 4l5-2 2 4-4 3zM9 9l5-1-2 5-3 1z', '#b8e4f5') + fill('M1 8l4 2 1 5-4-3z', '#2c5a92'),
}
</script>

<style>
html,
body {
  background: #d4d0c8;
}
</style>

<style scoped>
.app {
  display: flex;
  flex-direction: column;
  height: 100vh;
  overflow: hidden;
  background: #d4d0c8;
  color: #000;
  font-family: "Liberation Serif", "Noto Sans CJK SC", serif;
  font-size: 12px;
  line-height: 16px;
}

.app * {
  box-sizing: border-box;
}

.defs {
  position: absolute;
  width: 0;
  height: 0;
}

button,
select,
input {
  margin: 0;
  padding: 0;
  border: 0;
  border-radius: 0;
  background: none;
  color: inherit;
  font: inherit;
}

.icon {
  display: block;
  flex: none;
  width: 16px;
  height: 16px;
  overflow: visible;
}

.icon.small {
  width: 15px;
  height: 15px;
}

/* title and menu */
.titlebar {
  display: flex;
  align-items: center;
  flex: none;
  height: 18px;
  padding: 0 2px;
  gap: 2px;
  background: linear-gradient(90deg, #0a246a, #a6caf0);
  color: #fff;
}

.titlebar h1 {
  margin: 0;
  font: bold 12px/16px "Liberation Mono", monospace;
}

.menubar {
  display: flex;
  align-items: center;
  flex: none;
  height: 20px;
  padding: 0 2px 0 4px;
}

.menu {
  flex: none;
  width: 54px;
  padding-left: 6px;
  text-align: left;
  white-space: nowrap;
}

.menu.latin {
  font-size: 13px;
}

.window-buttons {
  display: flex;
  margin-left: auto;
}

.window-buttons button,
.palette-close {
  display: flex;
  align-items: center;
  justify-content: center;
  width: 16px;
  height: 14px;
  border: 1px solid;
  border-color: #fff #404040 #404040 #fff;
  background: #d4d0c8;
}

.window-buttons .close {
  margin-left: 2px;
}

.window-buttons svg {
  width: 10px;
  height: 9px;
}

/* toolbars */
.toolbar-row {
  display: flex;
  flex: none;
  gap: 3px;
  height: 28px;
  overflow: hidden;
}

.left .toolbar-row {
  gap: 2px;
  margin-right: 4px;
}

.toolbar {
  display: flex;
  align-items: center;
  flex: none;
  height: 27px;
  padding: 0 3px 0 2px;
  border: 1px solid;
  border-color: #fff #808080 #808080 #fff;
}

.grip {
  flex: none;
  width: 7px;
  height: 23px;
  margin-right: 2px;
  background: linear-gradient(90deg, #fff 0 1px, #d4d0c8 1px 2px, #808080 2px 3px, #d4d0c8 3px 4px, #fff 4px 5px, #d4d0c8 5px 6px, #808080 6px);
}

.sep {
  flex: none;
  width: 2px;
  height: 22px;
  margin: 0 2px;
  border-left: 1px solid #808080;
  border-right: 1px solid #fff;
}

.tool {
  display: flex;
  align-items: center;
  justify-content: center;
  flex: none;
  width: 23px;
  height: 22px;
}

.drop {
  display: flex;
  justify-content: center;
  flex: none;
  width: 12px;
}

.drop::after {
  content: "";
  border: solid transparent;
  border-width: 3px 3px 0;
  border-top-color: #000;
}

.drop.off {
  opacity: 0.2;
}

.drop.wide::after {
  border-width: 4px 4px 0;
}

.combo {
  display: flex;
  align-items: center;
  flex: none;
  height: 21px;
  margin-left: 2px;
  padding-left: 3px;
  border: 1px solid;
  border-color: #808080 #fff #fff #808080;
  box-shadow: inset 1px 1px #404040;
  background: #fff;
}

.combo select {
  flex: 1;
  min-width: 0;
  height: 17px;
  appearance: none;
  font-size: 13px;
}

.combo .arrow {
  flex: none;
  width: 15px;
  height: 17px;
  margin-right: 1px;
  border: 1px solid;
  border-color: #fff #404040 #404040 #fff;
  background: #d4d0c8;
  pointer-events: none;
}

.combo .arrow::after {
  content: "";
  display: block;
  width: 0;
  margin: 6px auto 0;
  border: solid transparent;
  border-width: 4px 4px 0;
  border-top-color: #000;
}

.combo.disabled {
  background: #d4d0c8;
  color: #808080;
}

.combo.disabled select {
  opacity: 1;
  font-size: 12px;
  padding-left: 5px;
}

.combo.disabled .arrow::after {
  border-top-color: #808080;
}

.w98 { width: 98px; }
.w120 { width: 118px; }
.w123 { width: 123px; }
.w138 { width: 138px; margin-left: 7px; }
.w148 { width: 148px; }
.w158 { width: 157px; }
.w298 { width: 297px; gap: 1px; }

.swatch {
  flex: none;
  width: 10px;
  height: 10px;
  margin: 0 4px 0 2px;
  border: 1px solid #000;
}

.line {
  flex: none;
  height: 1px;
  margin-right: 5px;
  background: #000;
}

.line.long { width: 60px; }
.line.mid { width: 35px; }
.line.thin { width: 31px; margin-left: 3px; }

/* workspace */
.workspace {
  display: flex;
  flex: 1;
  min-height: 0;
}

.left {
  display: flex;
  flex: 1;
  flex-direction: column;
  min-width: 0;
}

.drawing-row {
  display: flex;
  flex: 1;
  gap: 2px;
  min-height: 0;
  padding-right: 4px;
}

.drawing {
  display: flex;
  flex: 1;
  flex-direction: column;
  min-width: 0;
  padding-bottom: 2px;
  border-top: 1px solid #808080;
  border-left: 2px solid #808080;
  border-right: 1px solid #fff;
  border-bottom: 1px solid #fff;
}

.canvas {
  display: block;
  flex: 1;
  width: 100%;
  min-height: 0;
  background: #000;
}

.canvas path {
  shape-rendering: crispEdges;
}

.white,
.cross {
  fill: none;
  stroke: #fff;
}

.green {
  fill: none;
  stroke: #0f0;
}

.green .end {
  marker-end: url(#tip);
}

.green .both {
  marker-start: url(#tip);
  marker-end: url(#tip);
}

.dims {
  fill: #f0f;
  font: 10px "Liberation Sans", sans-serif;
  text-anchor: middle;
}

.notes {
  fill: #fff;
  font-family: Lato, "Noto Sans CJK SC", sans-serif;
  font-weight: 300;
}

.notes .big { font-size: 27px; }
.notes .hanzi { font-size: 18px; }
.notes .answers { font-size: 26px; }
.notes .area { font-size: 13px; }
.notes .sum { font-size: 18px; }

.tabs {
  display: flex;
  flex: none;
  height: 15px;
}

.nav {
  display: flex;
  align-items: center;
  justify-content: center;
  width: 18px;
  border: 1px solid;
  border-color: #fff #808080 #808080 #fff;
}

.nav svg {
  width: 10px;
  height: 10px;
}

.tab {
  position: relative;
  height: 14px;
  margin-left: 8px;
  padding: 0 2px;
  border-bottom: 1px solid #000;
  line-height: 13px;
}

.tab::before,
.tab::after {
  content: "";
  position: absolute;
  top: 0;
  bottom: -1px;
  width: 6px;
}

.tab::before {
  left: -3px;
  border-left: 1px solid #000;
  transform: skewX(20deg);
}

.tab::after {
  right: -3px;
  border-right: 1px solid #000;
  transform: skewX(-20deg);
}

.tab.active {
  z-index: 0;
  background: #000;
  color: #fff;
}

.tab.active::before,
.tab.active::after {
  z-index: -1;
  background: #000;
}

.side {
  display: flex;
  flex: none;
  flex-direction: column;
  gap: 5px;
  width: 25px;
  overflow: hidden;
}

.toolbar.vertical {
  flex-direction: column;
  width: 25px;
  height: auto;
  padding: 2px 0;
}

.vertical .grip {
  width: 20px;
  height: 7px;
  margin: 0 0 1px;
  background: linear-gradient(#fff 0 1px, #d4d0c8 1px 2px, #808080 2px 3px, #d4d0c8 3px 4px, #fff 4px 5px, #d4d0c8 5px 6px, #808080 6px);
}

/* properties palette */
.properties {
  flex: none;
  width: 181px;
  padding: 5px 5px 0 8px;
  border-left: 2px solid #404040;
  border-top: 1px solid #808080;
  border-bottom: 1px solid #808080;
  background: #edecea;
}

.palette-head {
  display: flex;
  align-items: center;
  gap: 4px;
}

.palette-grip {
  flex: 1;
  height: 7px;
  border: solid #808080;
  border-width: 1px 0;
  background: linear-gradient(#fff 0 1px, #edecea 1px 4px, #fff 4px);
}

.palette-close {
  width: 12px;
  height: 11px;
}

.palette-close svg {
  width: 8px;
  height: 7px;
}

.palette-pick {
  display: flex;
  gap: 7px;
  align-items: center;
  margin: 7px 0 10px 1px;
}

.combo.selection {
  width: 81px;
  height: 23px;
  margin-left: 0;
}

.selection select {
  font-size: 12px;
}

.selection .arrow {
  height: 19px;
}

.pick-buttons {
  display: flex;
  border: 1px solid #c8c5bd;
}

.pick-buttons button {
  display: flex;
  align-items: center;
  justify-content: center;
  width: 24px;
  height: 23px;
}

.pick-buttons button + button {
  border-left: 1px solid #c8c5bd;
}

.group {
  width: 151px;
  margin: 0 0 6px 3px;
}

.group h2 {
  display: flex;
  justify-content: space-between;
  align-items: center;
  height: 17px;
  margin: 0;
  padding: 0 10px 0 6px;
  border-radius: 6px 6px 0 0;
  background: #c6c3bb;
  color: #fff;
  font-size: 13px;
}

.group h2 svg {
  width: 10px;
  height: 10px;
}

.group table {
  width: 135px;
  margin-left: 16px;
  border-collapse: collapse;
  table-layout: fixed;
}

.group th,
.group td {
  height: 16px;
  padding: 0 1px;
  border: 1px solid #c6c3bb;
  line-height: 15px;
  white-space: nowrap;
}

.group th {
  width: 50px;
  padding-left: 4px;
  font-weight: normal;
  text-align: left;
}

.group td {
  background: #fff;
}

.group td.locked {
  background: none;
}

.cell {
  display: flex;
  align-items: center;
}

.hint {
  width: 151px;
  height: 31px;
  margin: 37px 0 0 4px;
  border: 1px solid #c6c3bb;
}

/* command window */
.command {
  display: flex;
  flex: none;
  gap: 3px;
  height: 60px;
  padding: 8px 8px 2px 6px;
  border-top: 1px solid #fff;
  background: linear-gradient(#d4d0c8 0 3px, #000 3px 4px, #d4d0c8 4px);
}

.command-grip {
  width: 7px;
  height: 42px;
  background: linear-gradient(90deg, #fff 0 1px, #d4d0c8 1px 2px, #808080 2px 3px, #d4d0c8 3px 4px, #fff 4px 5px, #d4d0c8 5px 6px, #808080 6px);
}

.console {
  flex: 1;
  min-width: 0;
  border-top: 2px solid #000;
  border-left: 1px solid #000;
  font-family: "Liberation Mono", "Noto Sans CJK SC", monospace;
  font-size: 14px;
  line-height: 15px;
}

.history {
  display: flex;
  height: 31px;
  border-bottom: 1px solid #808080;
  background: #fff;
}

.history p {
  flex: 1;
  margin: 0;
  padding-left: 1px;
  white-space: nowrap;
}

.vscroll button,
.hscroll button {
  display: flex;
  align-items: center;
  justify-content: center;
  width: 15px;
  height: 15px;
  border: 1px solid;
  border-color: #fff #404040 #404040 #fff;
  background: #d4d0c8;
}

.vscroll svg,
.hscroll svg {
  width: 10px;
  height: 10px;
}

.prompt {
  display: flex;
  height: 16px;
  padding: 0 16px 0 1px;
  background: linear-gradient(90deg, #fff calc(100% - 79px), #d4d0c8 0);
}

.prompt input {
  flex: 1;
  min-width: 0;
  outline: 0;
}

.hscroll {
  display: flex;
  background: #e9e7e3;
}

.hscroll i {
  width: 15px;
}

/* status bar */
.statusbar {
  display: flex;
  align-items: center;
  flex: none;
  gap: 3px;
  height: 24px;
  padding: 2px 2px 0 5px;
  border-top: 1px solid #808080;
}

.coords {
  width: 250px;
  height: 18px;
  margin-right: 1px;
  border: 1px solid #808080;
  color: #808080;
  font-size: 13px;
}

.mode {
  flex: none;
  height: 18px;
  padding: 0 1px;
  border: 1px solid;
  border-color: #fff #808080 #808080 #fff;
  line-height: 15px;
  min-width: 23px;
  margin-right: 1px;
}

.mode.latin {
  padding: 0;
  font-size: 11px;
}

.mode.on {
  border-color: #000 #fff #fff #000;
  background: #e4e1dc;
}

.lock {
  display: flex;
  align-items: center;
  justify-content: center;
  width: 24px;
  height: 18px;
  margin-left: auto;
  border: 1px solid;
  border-color: #808080 #fff #fff #808080;
}

/* taskbar */
.taskbar {
  display: flex;
  align-items: center;
  flex: none;
  gap: 4px;
  height: 29px;
  padding: 0 2px 2px;
  border-top: 1px solid #fff;
}

.start,
.task {
  display: flex;
  align-items: center;
  flex: none;
  gap: 2px;
  height: 22px;
  border: 1px solid;
  border-color: #fff #404040 #404040 #fff;
}

.start {
  width: 47px;
  padding-left: 1px;
}

.divider {
  flex: none;
  width: 3px;
  height: 20px;
  margin: 0 2px 0 4px;
  border: 1px solid;
  border-color: #fff #808080 #808080 #fff;
}

.quick {
  display: flex;
  gap: 7px;
  width: 121px;
}

.task {
  width: 160px;
  padding-left: 4px;
  gap: 4px;
}

.task.current {
  border-color: #404040 #fff #fff #404040;
  background: #e9e7e3;
  font-size: 13px;
}

.tray-tools {
  display: flex;
  align-items: center;
  gap: 2px;
  margin-left: auto;
}

.tray {
  display: flex;
  align-items: center;
  flex: none;
  gap: 2px;
  width: 137px;
  height: 22px;
  padding: 0 2px;
  border: 1px solid;
  border-color: #808080 #fff #fff #808080;
}

.tray time {
  margin-left: 5px;
  font-size: 13px;
}
</style>
